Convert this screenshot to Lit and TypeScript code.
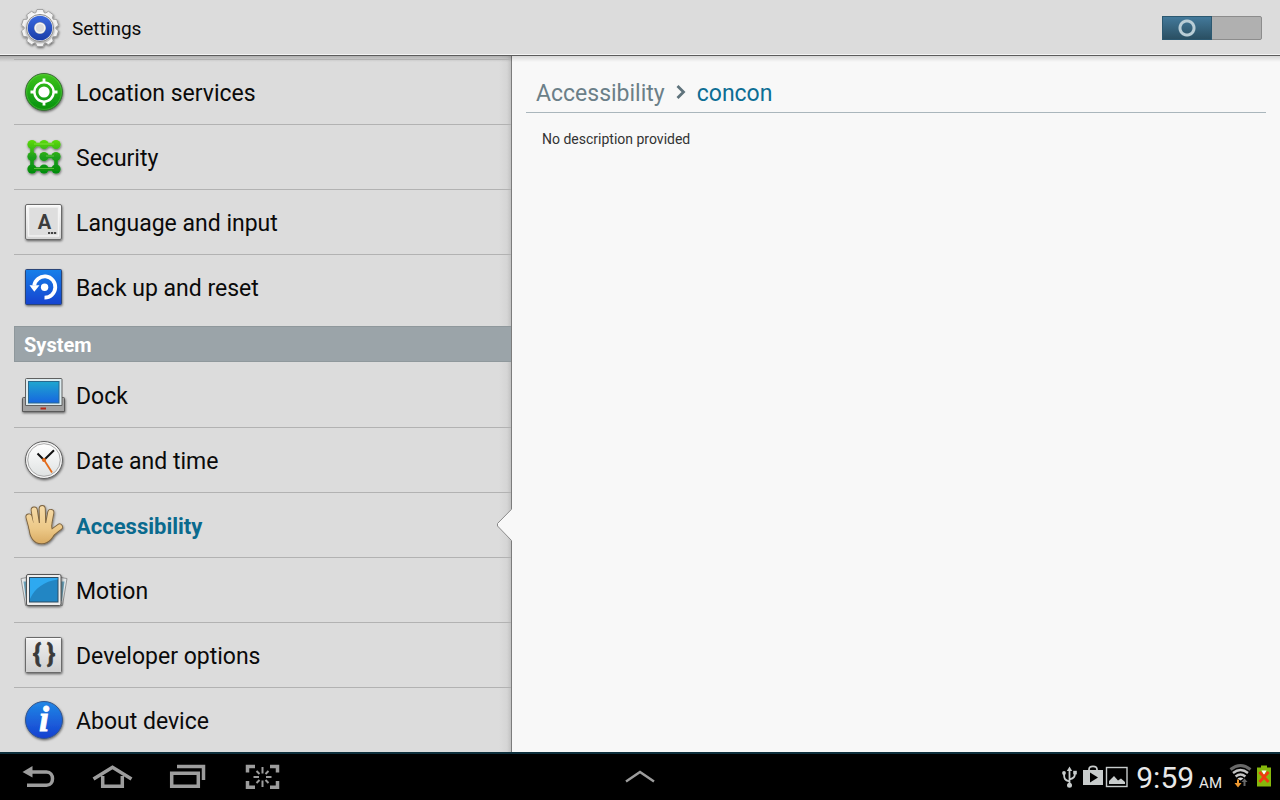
import { LitElement, html, svg, css, nothing } from "lit";
import { customElement, property, state } from "lit/decorators.js";
import { classMap } from "lit/directives/class-map.js";

const drop = svg`<filter id="drop" x="-20%" y="-20%" width="140%" height="150%"><feDropShadow dx="0.5" dy="1.2" stdDeviation="0.8" flood-opacity="0.55"/></filter>`;

const gradient = (id: string, from: string, to: string) => svg`
  <linearGradient id=${id} x1="0" y1="0" x2="0" y2="1"><stop offset="0" stop-color=${from}/><stop offset="1" stop-color=${to}/></linearGradient>`;

const handShape = svg`
  <path d="M9 16 L12 27 M14.2 9 L16.5 24 M22.2 7.5 L22.6 22 M30.8 11.5 L28.5 24" fill="none" stroke-linecap="round"/>
  <path d="M39.5 26 Q36 28.5 33 31" fill="none" stroke-linecap="round"/>`;
const palm = "M9.4 22 L31.2 22 C31 26 31.5 28 32 29 L36 28.5 C33.5 36 29 42 22 42.3 C14 42.5 10 36 9.5 27 Z";

const icons: Record<string, unknown> = {
  location: svg`${gradient("g", "#3fc41c", "#04900f")}
    <circle cx="24" cy="24" r="18.5" fill="url(#g)" stroke="#3c6e38" filter="url(#drop)"/>
    <circle cx="24" cy="24" r="17.4" fill="none" stroke="#7fdc62" stroke-opacity=".35"/>
    <circle cx="24" cy="24" r="9.6" fill="none" stroke="#fff" stroke-width="2.4"/>
    <circle cx="24" cy="24" r="5.6" fill="#fff"/>
    <path d="M24 10.5v4M24 33.5v4M10.5 24h4M33.5 24h4" stroke="#fff" stroke-width="2.8"/>`,
  security: svg`
    <linearGradient id="g" gradientUnits="userSpaceOnUse" x1="0" y1="7" x2="0" y2="41"><stop offset="0" stop-color="#5ddb0c"/><stop offset=".5" stop-color="#1fa01c"/><stop offset="1" stop-color="#028c0a"/></linearGradient>
    <g filter="url(#drop)">
      <path d="M12 11.5H36M12 11.5V36H36V23.5H24" fill="none" stroke="url(#g)" stroke-width="3.6"/>
      ${[[12, 11.5], [24, 11.5], [36, 11.5], [12, 23.5], [24, 23.5], [36, 23.5], [12, 36], [24, 36], [36, 36]].map(
        ([x, y]) => svg`<circle cx=${x} cy=${y} r="4.6" fill="url(#g)"/>`
      )}
    </g>
    <path d="M14 11h20M26 23h8M14 35.5h20" stroke="#c4ff7c" stroke-opacity=".4" stroke-width="1"/>`,
  language: svg`${gradient("g", "#fdfdfd", "#d4d4d4")}
    <rect x="5.5" y="6.5" width="36" height="35" rx="1.5" fill="url(#g)" stroke="#6a6a6a" filter="url(#drop)"/>
    <rect x="8.5" y="9" width="30" height="29" fill="#dedede" stroke="#f4f4f4" stroke-width="1.4"/>
    <text x="24.5" y="31" text-anchor="middle" font-size="20" font-weight="700" fill="#3c3c3c">A</text>
    <path d="M28 35h2.2M31 35h2.2M34 35h2.2" stroke="#444" stroke-width="2"/>`,
  backup: svg`${gradient("g", "#1580ea", "#1243cf")}
    <rect x="5.5" y="6.5" width="36" height="35" rx="1" fill="url(#g)" stroke="#2c4478" filter="url(#drop)"/>
    <path d="M14.2 22.5A10.6 10.6 0 1 1 24.5 34.6" fill="none" stroke="#fff" stroke-width="3.8"/>
    <path d="M9.5 22.3H19.5L14.3 28.8Z" fill="#fff"/>
    <circle cx="24.6" cy="24.3" r="3.7" fill="#fff"/>`,
  dock: svg`${gradient("g", "#1fa6cf", "#1666e0")}
    <path d="M3.5 26.5H43.5Q44.5 26.5 44.5 27.5V40.5H2.5V27.5Q2.5 26.5 3.5 26.5Z" fill="#a2a2a2" stroke="#5a5a5a" filter="url(#drop)"/>
    <path d="M5.5 34.5V8.5Q5.5 7.5 6.5 7.5H41Q42 7.5 42 8.5V34.5Z" fill="#dcebf0" stroke="#606060"/>
    <rect x="8.5" y="10.5" width="30.5" height="21.5" fill="url(#g)" stroke="#28698e"/>
    <rect x="20.5" y="36.5" width="5.5" height="2" fill="#b52a18"/>`,
  clock: svg`${gradient("g", "#ffffff", "#dfe2e2")}
    <circle cx="24" cy="24" r="18.5" fill="#f6f6f6" stroke="#606060" filter="url(#drop)"/>
    <circle cx="24" cy="24" r="16.3" fill="url(#g)" stroke="#aaa" stroke-width="1"/>
    <path d="M17.5 17.5L24 24L34 14.2" fill="none" stroke="#111" stroke-width="2"/>
    <path d="M23.5 23L32 36.5" stroke="#e46c1c" stroke-width="1.8"/>
    <circle cx="24" cy="24" r="2" fill="#e46c1c"/>`,
  hand: svg`
    <linearGradient id="g" gradientUnits="userSpaceOnUse" x1="0" y1="5" x2="0" y2="43"><stop offset="0" stop-color="#f6dba8"/><stop offset=".6" stop-color="#ecc887"/><stop offset="1" stop-color="#d9ab62"/></linearGradient>
    <g filter="url(#drop)">
      <g stroke="#7d6440" stroke-width="7"><path d=${palm} fill="#7d6440" stroke-width="2"/>${handShape}</g>
      <g stroke="url(#g)" stroke-width="5.2"><path d=${palm} fill="url(#g)" stroke="none"/>${handShape}</g>
    </g>`,
  motion: svg`
    <path d="M1 12.5L10 11V39L5.5 39.5Z" fill="#e4e8ea" stroke="#969696"/><path d="M3.5 15.5H8V35H6.2Z" fill="#6fa6bd"/>
    <path d="M47 12.5L38 11V39L42.5 39.5Z" fill="#e4e8ea" stroke="#969696"/><path d="M44.5 15.5H40V35H41.8Z" fill="#6fa6bd"/>
    <rect x="6.5" y="8.5" width="34.5" height="31" rx="1.5" fill="#ededed" stroke="#555" filter="url(#drop)"/>
    <rect x="9.5" y="11.5" width="28.5" height="24.5" fill="#2286c4" stroke="#2d4c62"/>
    <path d="M10 12H37.5V13.5C24 15.500 15 22 10 33Z" fill="#2ea9f0"/>`,
  developer: svg`${gradient("g", "#f0f0f0", "#cfcfcf")}
    <rect x="5.5" y="6.5" width="36" height="35" rx="1" fill="url(#g)" stroke="#6a6a6a" filter="url(#drop)"/>
    <path d="M6.5 7.800H40.5" stroke="#fff"/>
    <text x="17" y="31" text-anchor="middle" font-size="26" font-weight="700" fill="#3a3a3a" stroke="#3a3a3a" stroke-width=".6">{</text>
    <text x="31" y="31" text-anchor="middle" font-size="26" font-weight="700" fill="#3a3a3a" stroke="#3a3a3a" stroke-width=".6">}</text>`,
  about: svg`${gradient("g", "#2188e6", "#163fd0")}
    <circle cx="24" cy="24" r="18.500" fill="url(#g)" stroke="#34558c" filter="url(#drop)"/>
    <text class="serif" x="24" y="35" text-anchor="middle" font-size="36" font-weight="700" font-style="italic" fill="#fff" stroke="#fff" stroke-width=".8">i</text>`,
  gear: svg`${gradient("g", "#3a6ae0", "#1a3da8")}${gradient("m", "#ffffff", "#b9b9b9")}
    <g filter="url(#drop)">
      ${[0, 36, 72, 108, 144, 180, 216, 252, 288, 324].map(
        (a) => svg`<path transform="rotate(${a} 24 24)" d="M18.500 12L21 5.500H27L29.500 12Z" fill="#f2f2f2" stroke="#8e8e8e" stroke-width=".7"/>`
      )}
      <circle cx="24" cy="24" r="15.500" fill="url(#m)"/>
    </g>
    <circle cx="24" cy="24" r="13.600" fill="#e8e8e8" stroke="#777" stroke-width=".8"/>
    <circle cx="24" cy="24" r="12.300" fill="url(#g)"/>
    <circle cx="24" cy="24" r="6" fill="#8f98a8"/>
    <circle cx="24" cy="24" r="4.800" fill="#dcdcdc" stroke="#f4f4f4" stroke-width="1.600"/>`,
};

const appIcon = (name: string) => html`<svg class="icon" viewBox="0 0 48 48" aria-hidden="true">${drop}${icons[name]}</svg>`;

@customElement("settings-row")
class SettingsRow extends LitElement {
  @property() icon = "";
  @property() label = "";
  @property({ type: Boolean, reflect: true }) selected = false;

  static styles = css`
    :host { display: block; }
    .row {
      position: relative; display: flex; align-items: center; gap: 8px;
      height: 64px; padding-left: 6px; color: #0a0a0a; text-decoration: none;
      font: 23px/28px Roboto, sans-serif;
    }
    .selected { color: #0a6a8e; font-weight: 700; font-size: 22px; }
    .label { padding-top: 4px; }
    .icon { width: 48px; height: 48px; flex: none; font-family: Roboto, sans-serif; }
    .serif { font-family: "Liberation Serif", serif; }
    .pointer { position: absolute; right: -1px; top: 50%; width: 16px; height: 34px; margin-top: -17px; }
  `;

  render() {
    return html`<a href="#" class=${classMap({ row: true, selected: this.selected })} aria-current=${this.selected ? "page" : nothing}>
      ${appIcon(this.icon)}<span class="label">${this.label}</span>
      ${this.selected
        ? html`<svg class="pointer" viewBox="0 0 16 34" aria-hidden="true"><path d="M16 .8L1.500 15.500V18L16 33Z" fill="#f8f8f8"/><path d="M15.500 1.300L1.500 15.500V18L15.500 32.500" fill="none" stroke="#8a8a8a"/></svg>`
        : nothing}
    </a>`;
  }
}

@customElement("system-bar")
class SystemBar extends LitElement {
  static styles = css`
    :host {
      display: grid; grid-template-columns: 1fr auto 1fr; flex: none; height: 48px; box-sizing: border-box;
      border-top: 2px solid #0d2f3c; background: #000; color: #e8e8e8; font-family: Roboto, sans-serif;
    }
    .keys { display: flex; }
    button { display: flex; padding: 0; border: 0; background: none; justify-self: center; }
    .key { width: 75px; height: 46px; }
    .status { display: flex; justify-content: flex-end; padding-right: 8px; }
    .glyph { width: 24px; height: 46px; }
    .battery { width: 16px; margin-left: 4px; }
    .time { display: flex; align-items: baseline; gap: 5px; margin: 0 6px 0 7px; font-size: 30px; line-height: 48px; }
    .half { font-size: 15px; }
  `;

  key(label: string, art: unknown) {
    return html`<button aria-label=${label}><svg class="key" viewBox="0 0 75 46" fill="none" stroke="#9d9d9d" stroke-width="3.500" aria-hidden="true">${art}</svg></button>`;
  }

  render() {
    return html`
      <nav class="keys">
        ${this.key("Back", svg`<path d="M30 18H46.500C54.500 18 54.500 31.300 46.500 31.300H27"/><path d="M22.500 18L32.500 12V23.500Z" fill="#9d9d9d" stroke="none"/>`)}
        ${this.key("Home", svg`<path d="M18.500 25L37.500 13.200L56.500 25"/><path d="M27.700 22V32.300H47.300V22"/>`)}
        ${this.key("Recent apps", svg`<path d="M27 12.500H53.500V26"/><path d="M21.700 19.200H48.300V32.300H21.700Z"/>`)}
        ${this.key("Screenshot", svg`<path d="M30 12.500H22.500V18.500M45 12.500H52.500V18.500M22.500 27V33.200H30M52.500 27V33.200H45"/><path stroke-width="2" d="M37.500 13V19.500M37.500 26.500V33M28.500 23H34M41 23H46.500M31.500 17L34.500 20M43.500 17L40.500 20M31.500 29L34.500 26M43.500 29L40.500 26"/>`)}
      </nav>
      ${this.key("Open tray", svg`<path d="M23 27.500L37 18L51 27.500" stroke-width="2.500"/>`)}
      <div class="status">
        <svg class="glyph" viewBox="0 0 24 46" fill="none" stroke="#c8cccc" stroke-width="1.800" aria-label="USB connected">
          <path d="M12.500 15V31M12.500 27.500C8 26 7 25.500 7 19M12.500 25.500C17 24 18 23 18 18.500"/>
          <g fill="#c8cccc" stroke="none"><path d="M9.800 17L12.500 12.500L15.200 17Z"/><circle cx="12.500" cy="31.300" r="2.500"/><circle cx="7" cy="19" r="1.900"/><rect x="16.200" y="16.800" width="3.600" height="3.600"/></g>
        </svg>
        <svg class="glyph" viewBox="0 0 24 46" aria-label="App updates">
          <path d="M8 17V15.500Q8 12.300 12 12.300T16 15.500V17" fill="none" stroke="#c8cccc" stroke-width="1.700"/>
          <rect x="2" y="16" width="20" height="15" fill="#c8cccc"/><path d="M9 18.500V28.500L17 23.500Z" fill="#000"/>
        </svg>
        <svg class="glyph" viewBox="0 0 24 46" aria-label="Screenshot saved">
          <rect x="1.500" y="13.500" width="20.500" height="19" fill="none" stroke="#c8cccc" stroke-width="1.400"/>
          <path d="M4 30V27L9 22L13 26.500L16 24.500L20 28V30Z" fill="#c8cccc"/>
        </svg>
        <div class="time"><span>9:59</span><span class="half">AM</span></div>
        <svg class="glyph" viewBox="0 0 24 46" fill="none" stroke-width="2.400" aria-label="Wi-Fi">
          <path d="M2.500 15.500Q12.500 7.500 22.500 15.500" stroke="#686868" stroke-width="3"/>
          <path d="M5 19Q12.500 13 20 19M7.600 22.500Q12.500 18.500 17.400 22.500" stroke="#c4c4c4"/>
          <path d="M12.500 26.500L9.500 24.500Q12.500 22.300 15.500 24.500Z" fill="#d8d8d8"/>
          <path d="M10 25.500V31" stroke="#f09a30" stroke-width="2"/><path d="M6.500 29H13.500L10 33.500Z" fill="#f09a30"/>
          <path d="M16.500 27V32" stroke="#686868" stroke-width="2"/><path d="M13.500 28H19.500L16.500 24.500Z" fill="#686868"/>
        </svg>
        <svg class="glyph battery" viewBox="0 0 16 46" aria-label="Battery not charging">
          <path d="M1 13.500H5V11.500H11V13.500H15V32.500H1Z" fill="#86b80c"/>
          <path d="M5.500 16.500H10.500L8 21Z" fill="#fff"/>
          <path d="M3.500 18L12.500 28M12.500 18L3.500 28" stroke="#f03a12" stroke-width="2.800"/>
        </svg>
      </div>`;
  }
}

@customElement("app-root")
class AppRoot extends LitElement {
  @state() enabled = true;

  static styles = css`
    :host { display: flex; flex-direction: column; height: 100vh; background: #f8f8f8; font-family: Roboto, sans-serif; }
    .bar {
      display: flex; align-items: center; gap: 8px; flex: none; height: 56px; box-sizing: border-box;
      padding: 1px 18px 0 16px; background: #dcdcdc; border-bottom: 1px solid #5c5c5c; box-shadow: inset 0 -1px #f4f4f4;
    }
    .icon { width: 48px; height: 48px; }
    .title { margin: 0; padding-top: 2px; flex: 1; font-weight: 400; font-size: 19px; line-height: 24px; color: #0a0a0a; }
    .switch {
      appearance: none; display: flex; box-sizing: border-box; width: 100px; height: 24px; margin: 0;
      background: #b0b0b0; border: 1px solid #8c8c8c; border-radius: 2px; justify-content: flex-end;
    }
    .switch::before {
      content: ""; width: 48px;
      background: radial-gradient(circle, transparent 5px, #b9cdd6 6px, #b9cdd6 8px, transparent 9px), linear-gradient(#43799a, #2a4f62);
      box-shadow: 0 0 0 1px #2c5870;
    }
    .switch:checked { justify-content: flex-start; }
    .panes { display: grid; grid-template-columns: 2fr 3fr; flex: 1; min-height: 0; }
    .side {
      overflow: hidden; padding: 3px 1px 0 14px; min-height: 0;
      background: linear-gradient(#0003, #0000 6px), linear-gradient(to left, #7c7c7c 1px, #c2c2c2 1px, #d5d5d5 5px, #dcdcdc 13px);
    }
    ul { list-style: none; margin: 0; padding: 0; }
    .wireless { border-top: 1px solid #b2b2b2; }
    li + li { border-top: 1px solid #b2b2b2; }
    .group {
      margin: 7px 0 1px; padding: 0 9px; border: 1px solid #8f989c; border-right: 0; background: #9ba4a9; color: #fff;
      font-size: 20px; line-height: 36px; height: 34px; font-weight: 700;
    }
    .detail { padding: 22px 14px 0; background: linear-gradient(#0002, #0000 6px); }
    .crumbs {
      display: flex; align-items: center; gap: 11px; padding: 0 10px 2px; margin: 0; border-bottom: 1px solid #aab6bc;
      font-size: 23px; line-height: 32px; font-weight: 400; color: #0d6e94;
    }
    .crumbs a { color: #6b7f88; text-decoration: none; }
    .chevron { width: 10px; height: 14px; margin-bottom: 4px; }
    .note { margin: 16px 16px 0; font-size: 14px; line-height: 20px; color: #333; }
  `;

  group(rows: [string, string][], cls = "") {
    return html`<ul class=${cls}>
      ${rows.map(([icon, label]) => html`<li><settings-row icon=${icon} label=${label} ?selected=${label === "Accessibility"}></settings-row></li>`)}
    </ul>`;
  }

  render() {
    return html`
      <header class="bar">
        ${appIcon("gear")}
        <h1 class="title">Settings</h1>
        <input class="switch" type="checkbox" role="switch" aria-label="concon" .checked=${this.enabled}
          @change=${(e: Event) => (this.enabled = (e.target as HTMLInputElement).checked)} />
      </header>
      <main class="panes">
        <nav class="side">
          ${this.group([["location", "Location services"], ["security", "Security"], ["language", "Language and input"], ["backup", "Back up and reset"]], "wireless")}
          <h2 class="group">System</h2>
          ${this.group([["dock", "Dock"], ["clock", "Date and time"], ["hand", "Accessibility"], ["motion", "Motion"], ["developer", "Developer options"], ["about", "About device"]])}
        </nav>
        <section class="detail">
          <h2 class="crumbs">
            <a href="#">Accessibility</a>
            <svg class="chevron" viewBox="0 0 10 14" aria-hidden="true"><path d="M1.500 1L7.500 7L1.500 13" fill="none" stroke="#5f737c" stroke-width="2.800"/></svg>
            <span>concon</span>
          </h2>
          <p class="note">No description provided</p>
        </section>
      </main>
      <system-bar></system-bar>`;
  }
}
